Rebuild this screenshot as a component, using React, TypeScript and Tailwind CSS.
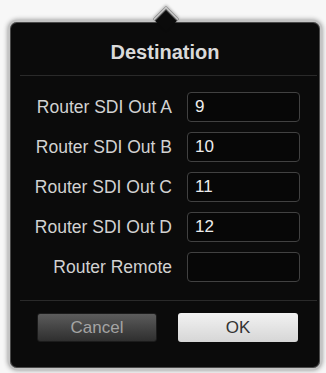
import React from 'react';

interface Route {
  label: string;
  value: string;
}

const routes: Route[] = [
  { label: 'Router SDI Out A', value: '9' },
  { label: 'Router SDI Out B', value: '10' },
  { label: 'Router SDI Out C', value: '11' },
  { label: 'Router SDI Out D', value: '12' },
  { label: 'Router Remote', value: '' },
];

const App: React.FC = () => {
  return (
    <div
      className="w-[326px] h-[373px] bg-[#f7f7f7] pt-[20px] pl-[8px] overflow-hidden"
      style={{ fontFamily: '"Liberation Sans", Arial, sans-serif' }}
    >
      <div className="relative w-[314px] h-[350px] rounded-[9px] border-2 border-[#c4c4c4] bg-[#0b0b0b] shadow-[0_0_5px_rgba(0,0,0,0.45),inset_0_0_0_1px_#4a4a4a]">
        {/* Arrow */}
        <div className="absolute left-[147px] top-[-12px] w-[18px] h-[18px] rotate-45 border-l-2 border-t-2 border-[#c4c4c4] bg-[#0b0b0b] shadow-[inset_1px_1px_0_#4a4a4a,-1px_-1px_3px_rgba(0,0,0,0.3)]" />

        {/* Header */}
        <div className="relative pt-[20px] pb-[13px] text-center">
          <h1 className="text-[20px] leading-[20px] font-bold text-[#dadada]">Destination</h1>
        </div>
        <div className="ml-[10px] mr-[3px] h-px bg-[#2a2a2a]" />

        {/* Routes */}
        <div className="pt-[16px] flex flex-col gap-[10px]">
          {routes.map((route) => (
            <div key={route.label} className="flex items-center">
              <span className="w-[162px] text-right text-[17.5px] text-[#d2d2d2]">
                {route.label}
              </span>
              <div className="ml-[15px] w-[113px] h-[30px] rounded-[4px] border border-[#414141] bg-[#070707] flex items-center px-[7px]">
                <span className="text-[17px] text-[#ededed]">{route.value}</span>
              </div>
            </div>
          ))}
        </div>

        <div className="mt-[18px] ml-[10px] mr-[3px] h-px bg-[#2a2a2a]" />

        {/* Buttons */}
        <div className="mt-[12px] pl-[27px] flex gap-[21px]">
          <button className="w-[120px] h-[29px] rounded-[3px] border border-[#1c1c1c] bg-gradient-to-b from-[#5c5c5c] to-[#2f2f2f] text-[17px] text-[#a4a4a4]">
            Cancel
          </button>
          <button className="w-[120px] h-[29px] rounded-[3px] bg-gradient-to-b from-[#f2f2f2] to-[#d6d6d6] text-[17px] text-[#333333]">
            OK
          </button>
        </div>
      </div>
    </div>
  );
};

export default App;
